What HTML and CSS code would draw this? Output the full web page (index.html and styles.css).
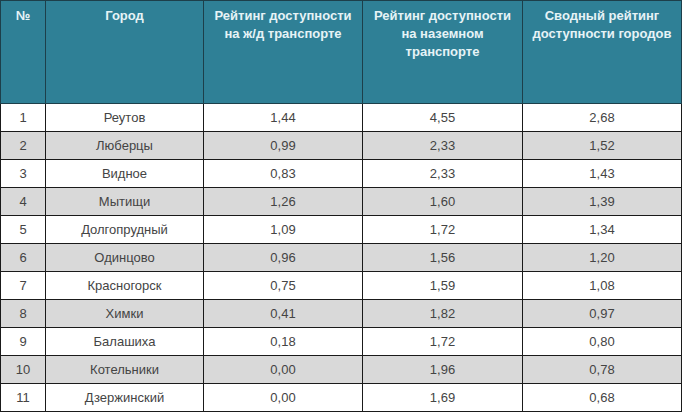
FILE: index.html
```html
<!DOCTYPE html>
<html>
<head>
<meta charset="utf-8">
<link rel="stylesheet" href="styles.css">
</head>
<body>
<table class="rating">
  <colgroup>
    <col class="c-num"><col class="c-city"><col class="c-a"><col class="c-b"><col class="c-c">
  </colgroup>
  <thead>
    <tr>
      <th>№</th>
      <th>Город</th>
      <th>Рейтинг доступности<br>на ж/д транспорте</th>
      <th>Рейтинг доступности<br>на наземном<br>транспорте</th>
      <th>Сводный рейтинг<br>доступности городов</th>
    </tr>
  </thead>
  <tbody>
    <tr><td>1</td><td>Реутов</td><td>1,44</td><td>4,55</td><td>2,68</td></tr>
    <tr class="alt"><td>2</td><td>Люберцы</td><td>0,99</td><td>2,33</td><td>1,52</td></tr>
    <tr><td>3</td><td>Видное</td><td>0,83</td><td>2,33</td><td>1,43</td></tr>
    <tr class="alt"><td>4</td><td>Мытищи</td><td>1,26</td><td>1,60</td><td>1,39</td></tr>
    <tr><td>5</td><td>Долгопрудный</td><td>1,09</td><td>1,72</td><td>1,34</td></tr>
    <tr class="alt"><td>6</td><td>Одинцово</td><td>0,96</td><td>1,56</td><td>1,20</td></tr>
    <tr><td>7</td><td>Красногорск</td><td>0,75</td><td>1,59</td><td>1,08</td></tr>
    <tr class="alt"><td>8</td><td>Химки</td><td>0,41</td><td>1,82</td><td>0,97</td></tr>
    <tr><td>9</td><td>Балашиха</td><td>0,18</td><td>1,72</td><td>0,80</td></tr>
    <tr class="alt"><td>10</td><td>Котельники</td><td>0,00</td><td>1,96</td><td>0,78</td></tr>
    <tr><td>11</td><td>Дзержинский</td><td>0,00</td><td>1,69</td><td>0,68</td></tr>
  </tbody>
</table>
</body>
</html>
```
FILE: styles.css
```css
html, body {
  margin: 0;
  padding: 0;
  background: #ffffff;
}
.rating {
  border-collapse: collapse;
  table-layout: fixed;
  width: 681px;
  font-family: "Liberation Sans", Arial, sans-serif;
}
.c-num { width: 45px; }
.c-city { width: 158px; }
.c-a { width: 159px; }
.c-b { width: 160px; }
.c-c { width: 159px; }
.rating th {
  height: 103px;
  padding: 6px 4px 0;
  box-sizing: border-box;
  vertical-align: top;
  background: #2f8096;
  color: #e6f3f6;
  font-size: 13px;
  font-weight: bold;
  line-height: 18px;
  text-align: center;
  border: 1px solid #1d3f4a;
}
.rating td {
  height: 28px;
  padding: 0;
  box-sizing: border-box;
  text-align: center;
  vertical-align: middle;
  font-size: 13px;
  color: #444444;
  border: 1px solid #1a1a1a;
}
.rating tr.alt td {
  background: #d9d9d9;
}
```
